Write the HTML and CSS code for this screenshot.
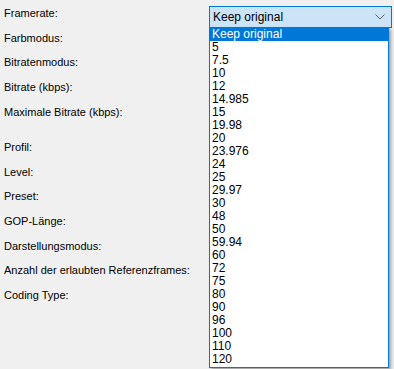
FILE: index.html
```html
<!DOCTYPE html>
<html>
<head>
<meta charset="utf-8">
<link rel="stylesheet" href="styles.css">
</head>
<body>
<div class="form">
  <div class="row r1">
    <span class="label">Framerate:</span>
    <div class="combo">
      <span class="combo-text">Keep original</span>
      <svg class="chev" width="10" height="6" viewBox="0 0 10 6"><path d="M0.5 0.5 L5 5 L9.5 0.5" fill="none" stroke="#606060" stroke-width="1"/></svg>
    </div>
  </div>
  <div class="row"><span class="label">Farbmodus:</span></div>
  <div class="row"><span class="label">Bitratenmodus:</span></div>
  <div class="row"><span class="label">Bitrate (kbps):</span></div>
  <div class="row"><span class="label">Maximale Bitrate (kbps):</span></div>
  <div class="row gap"><span class="label">Profil:</span></div>
  <div class="row"><span class="label">Level:</span></div>
  <div class="row"><span class="label">Preset:</span></div>
  <div class="row"><span class="label">GOP-Länge:</span></div>
  <div class="row"><span class="label">Darstellungsmodus:</span></div>
  <div class="row"><span class="label">Anzahl der erlaubten Referenzframes:</span></div>
  <div class="row"><span class="label">Coding Type:</span></div>
</div>
<ul class="dropdown">
  <li class="sel">Keep original</li>
  <li>5</li><li>7.5</li><li>10</li><li>12</li><li>14.985</li><li>15</li><li>19.98</li>
  <li>20</li><li>23.976</li><li>24</li><li>25</li><li>29.97</li><li>30</li><li>48</li>
  <li>50</li><li>59.94</li><li>60</li><li>72</li><li>75</li><li>80</li><li>90</li>
  <li>96</li><li>100</li><li>110</li><li>120</li>
</ul>
</body>
</html>
```
FILE: styles.css
```css
html, body {
  margin: 0;
  padding: 0;
  background: #f0f0f0;
  width: 394px;
  height: 369px;
  overflow: hidden;
  font-family: "Liberation Sans", Arial, sans-serif;
  font-size: 11px;
  color: #000;
}
.form {
  display: flex;
  flex-direction: column;
  padding: 1px 0 0 4px;
}
.row {
  height: 24.6px;
  display: flex;
  align-items: center;
  position: relative;
}
.row.gap {
  margin-top: 11px;
}
.label {
  white-space: nowrap;
}
.combo {
  position: absolute;
  left: 205px;
  top: 5px;
  width: 178px;
  height: 20px;
  border: 1px solid #0078d7;
  background: #cce4f7;
  display: flex;
  align-items: center;
  justify-content: space-between;
  padding-left: 3px;
  box-sizing: content-box;
}
.combo-text {
  font-size: 12px;
}
.chev {
  margin-right: 6px;
}
.dropdown {
  position: absolute;
  left: 209px;
  top: 27px;
  width: 178px;
  margin: 0;
  padding: 0 0 1px 0;
  list-style: none;
  background: #fff;
  border: 1px solid #0078d7;
  box-shadow: 2px 2px 3px rgba(0,0,0,0.35);
  font-size: 12px;
}
.dropdown li {
  height: 13px;
  line-height: 13px;
  padding-left: 2px;
}
.dropdown li.sel {
  background: #0078d7;
  color: #fff;
}
```
